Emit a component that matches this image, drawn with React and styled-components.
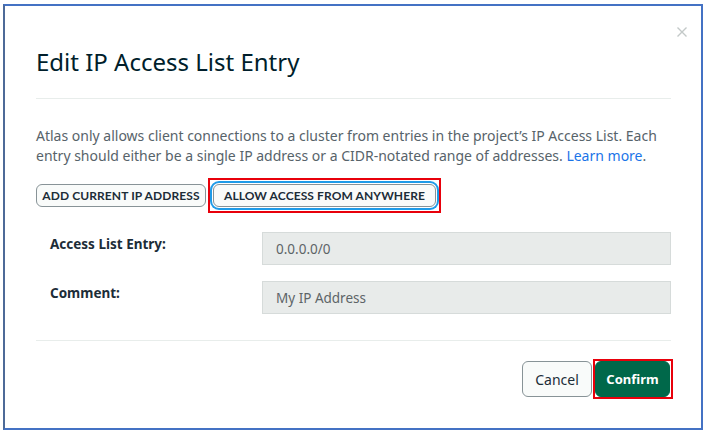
import React from "react";
import styled, { createGlobalStyle } from "styled-components";

const GlobalStyle = createGlobalStyle`
  html, body {
    margin: 0;
    padding: 0;
    background: #ffffff;
  }
  body {
    font-family: "Noto Sans", Lato, sans-serif;
  }
`;

const Frame = styled.div`
  position: relative;
  box-sizing: border-box;
  width: 700px;
  height: 426px;
  margin: 4px 0 0 3px;
  border: 2px solid #4472c4;
  border-left-color: #4d6a98;
  background: #ffffff;
  padding: 42px 30px 0 31px;
`;

const CloseButton = styled.button`
  position: absolute;
  top: 20px;
  right: 13px;
  width: 12px;
  height: 12px;
  padding: 0;
  border: none;
  background: transparent;
  display: flex;
`;

const Title = styled.h2`
  margin: 0;
  font-size: 24px;
  line-height: 28px;
  font-weight: 400;
  color: #001e2b;
`;

const Divider = styled.hr`
  margin: ${(props) => props.top}px 0 0 0;
  border: none;
  border-top: 1px solid #e8edeb;
`;

const Description = styled.p`
  margin: 27px 0 0 0;
  font-size: 14px;
  line-height: 20px;
  color: #57636a;
  white-space: nowrap;
`;

const Link = styled.a`
  color: #1a74e8;
  text-decoration: none;
`;

const ButtonRow = styled.div`
  display: flex;
  align-items: center;
  gap: 2px;
  margin-top: 12px;
`;

const Highlight = styled.div`
  display: inline-flex;
  border: 2px solid #e8000b;
  padding: ${(props) => props.pad};
  margin-right: ${(props) => props.shift || 0}px;
`;

const OutlineButton = styled.button`
  box-sizing: border-box;
  width: ${(props) => props.width}px;
  height: 23px;
  padding: 0;
  border: 1px solid #889397;
  border-radius: 6px;
  background: #f9fbfa;
  font-family: Lato, "Noto Sans", sans-serif;
  font-size: 12px;
  font-weight: 700;
  letter-spacing: 0.1px;
  color: #1c2d38;
  text-transform: uppercase;
  box-shadow: ${(props) =>
    props.focused ? "0 0 0 1px #ffffff, 0 0 0 3px #1e9be8" : "none"};
`;

const Fields = styled.div`
  display: grid;
  grid-template-columns: 226px 1fr;
  row-gap: 16px;
  margin-top: 19px;
`;

const Label = styled.label`
  padding: 2px 0 0 14px;
  font-size: 13.5px;
  line-height: 20px;
  font-weight: 700;
  color: #1c2d38;
`;

const Input = styled.input`
  box-sizing: border-box;
  height: 33px;
  width: 100%;
  padding: 0 13px;
  border: 1px solid #d6dbda;
  background: #e8ebea;
  font-family: "Noto Sans", Lato, sans-serif;
  font-size: 13.5px;
  color: #5d6467;
  outline: none;
`;

const Footer = styled.div`
  display: flex;
  justify-content: flex-end;
  align-items: center;
  gap: 1px;
  margin-top: 18px;
`;

const FooterButton = styled.button`
  box-sizing: border-box;
  width: ${(props) => props.width}px;
  height: 36px;
  padding: 0;
  border-radius: 6px;
  font-family: "Noto Sans", Lato, sans-serif;
  font-size: ${(props) => (props.primary ? 13 : 14)}px;
  border: 1px solid ${(props) => (props.primary ? "#00684a" : "#889397")};
  background: ${(props) => (props.primary ? "#00684a" : "#f9fbfa")};
  color: ${(props) => (props.primary ? "#ffffff" : "#1c2d38")};
  font-weight: ${(props) => (props.primary ? 700 : 400)};
`;

export default function App() {
  return (
    <>
      <GlobalStyle />
      <Frame>
        <CloseButton aria-label="Close">
          <svg width="12" height="12" viewBox="0 0 12 12">
            <path d="M1.5 1.5 L10.5 10.5 M10.5 1.5 L1.5 10.5" stroke="#c3c9c8" strokeWidth="1.4" />
          </svg>
        </CloseButton>
        <Title>Edit IP Access List Entry</Title>
        <Divider top={22} />
        <Description>
          Atlas only allows client connections to a cluster from entries in the project’s IP Access List. Each
          <br />
          entry should either be a single IP address or a CIDR-notated range of addresses.{" "}
          <Link href="#">Learn more</Link>.
        </Description>
        <ButtonRow>
          <OutlineButton width={170}>Add current IP address</OutlineButton>
          <Highlight pad="4px 3px">
            <OutlineButton width={223} focused>
              Allow access from anywhere
            </OutlineButton>
          </Highlight>
        </ButtonRow>
        <Fields>
          <Label>Access List Entry:</Label>
          <Input readOnly value="0.0.0.0/0" />
          <Label>Comment:</Label>
          <Input readOnly value="My IP Address" />
        </Fields>
        <Divider top={26} />
        <Footer>
          <FooterButton width={70}>Cancel</FooterButton>
          <Highlight pad="0 1px 0 0" shift={-2}>
            <FooterButton primary width={75}>
              Confirm
            </FooterButton>
          </Highlight>
        </Footer>
      </Frame>
    </>
  );
}
